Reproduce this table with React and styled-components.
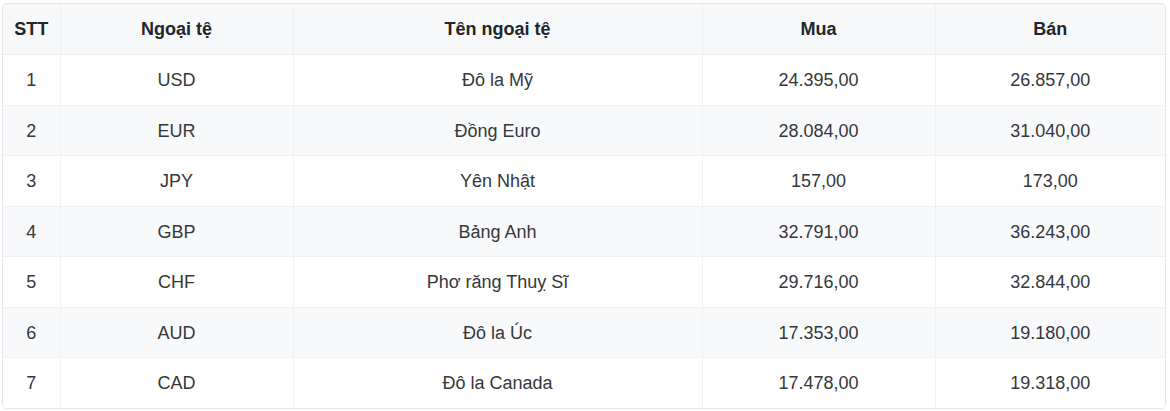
import React from "react";
import styled, { createGlobalStyle } from "styled-components";

const Global = createGlobalStyle`
  html, body { margin: 0; padding: 0; background: #ffffff; }
  body { font-family: "Liberation Sans", Arial, sans-serif; }
`;

const Page = styled.div`
  padding: 3px 4px 2px 2px;
`;

const Frame = styled.div`
  border: 1px solid #e4e6e9;
  border-radius: 5px;
  overflow: hidden;
  box-shadow: 0 1px 2px rgba(0, 0, 0, 0.04);
`;

const Table = styled.table`
  width: 100%;
  border-collapse: collapse;
  table-layout: fixed;
`;

const HeadCell = styled.th`
  height: 50px;
  padding: 0 6px;
  line-height: 20px;
  background: #f7f8fa;
  color: #222529;
  font-size: 18px;
  font-weight: 700;
  text-align: center;
  border-bottom: 1px solid #eceef1;
  border-right: 1px solid #eceef1;
  &:last-child { border-right: none; }
`;

const Row = styled.tr`
  background: ${(p) => (p.$striped ? "#f8f9fb" : "#ffffff")};
  &:last-child td { border-bottom: none; }
`;

const Cell = styled.td`
  height: 48.5px;
  padding: 1px 6px 0;
  line-height: 20px;
  color: #35373b;
  font-size: 18px;
  text-align: center;
  border-bottom: 1px solid #eff1f3;
  border-right: 1px solid #eff1f3;
  &:last-child { border-right: none; }
`;

const rows = [
  ["1", "USD", "Đô la Mỹ", "24.395,00", "26.857,00"],
  ["2", "EUR", "Đồng Euro", "28.084,00", "31.040,00"],
  ["3", "JPY", "Yên Nhật", "157,00", "173,00"],
  ["4", "GBP", "Bảng Anh", "32.791,00", "36.243,00"],
  ["5", "CHF", "Phơ răng Thuỵ Sĩ", "29.716,00", "32.844,00"],
  ["6", "AUD", "Đô la Úc", "17.353,00", "19.180,00"],
  ["7", "CAD", "Đô la Canada", "17.478,00", "19.318,00"],
];

export default function App() {
  return (
    <>
      <Global />
      <Page>
        <Frame>
          <Table>
            <colgroup>
              <col style={{ width: "57px" }} />
              <col style={{ width: "233px" }} />
              <col style={{ width: "409px" }} />
              <col style={{ width: "233px" }} />
              <col />
            </colgroup>
            <thead>
              <tr>
                <HeadCell>STT</HeadCell>
                <HeadCell>Ngoại tệ</HeadCell>
                <HeadCell>Tên ngoại tệ</HeadCell>
                <HeadCell>Mua</HeadCell>
                <HeadCell>Bán</HeadCell>
              </tr>
            </thead>
            <tbody>
              {rows.map((r, i) => (
                <Row key={r[0]} $striped={i % 2 === 1}>
                  {r.map((c, j) => (
                    <Cell key={j}>{c}</Cell>
                  ))}
                </Row>
              ))}
            </tbody>
          </Table>
        </Frame>
      </Page>
    </>
  );
}
